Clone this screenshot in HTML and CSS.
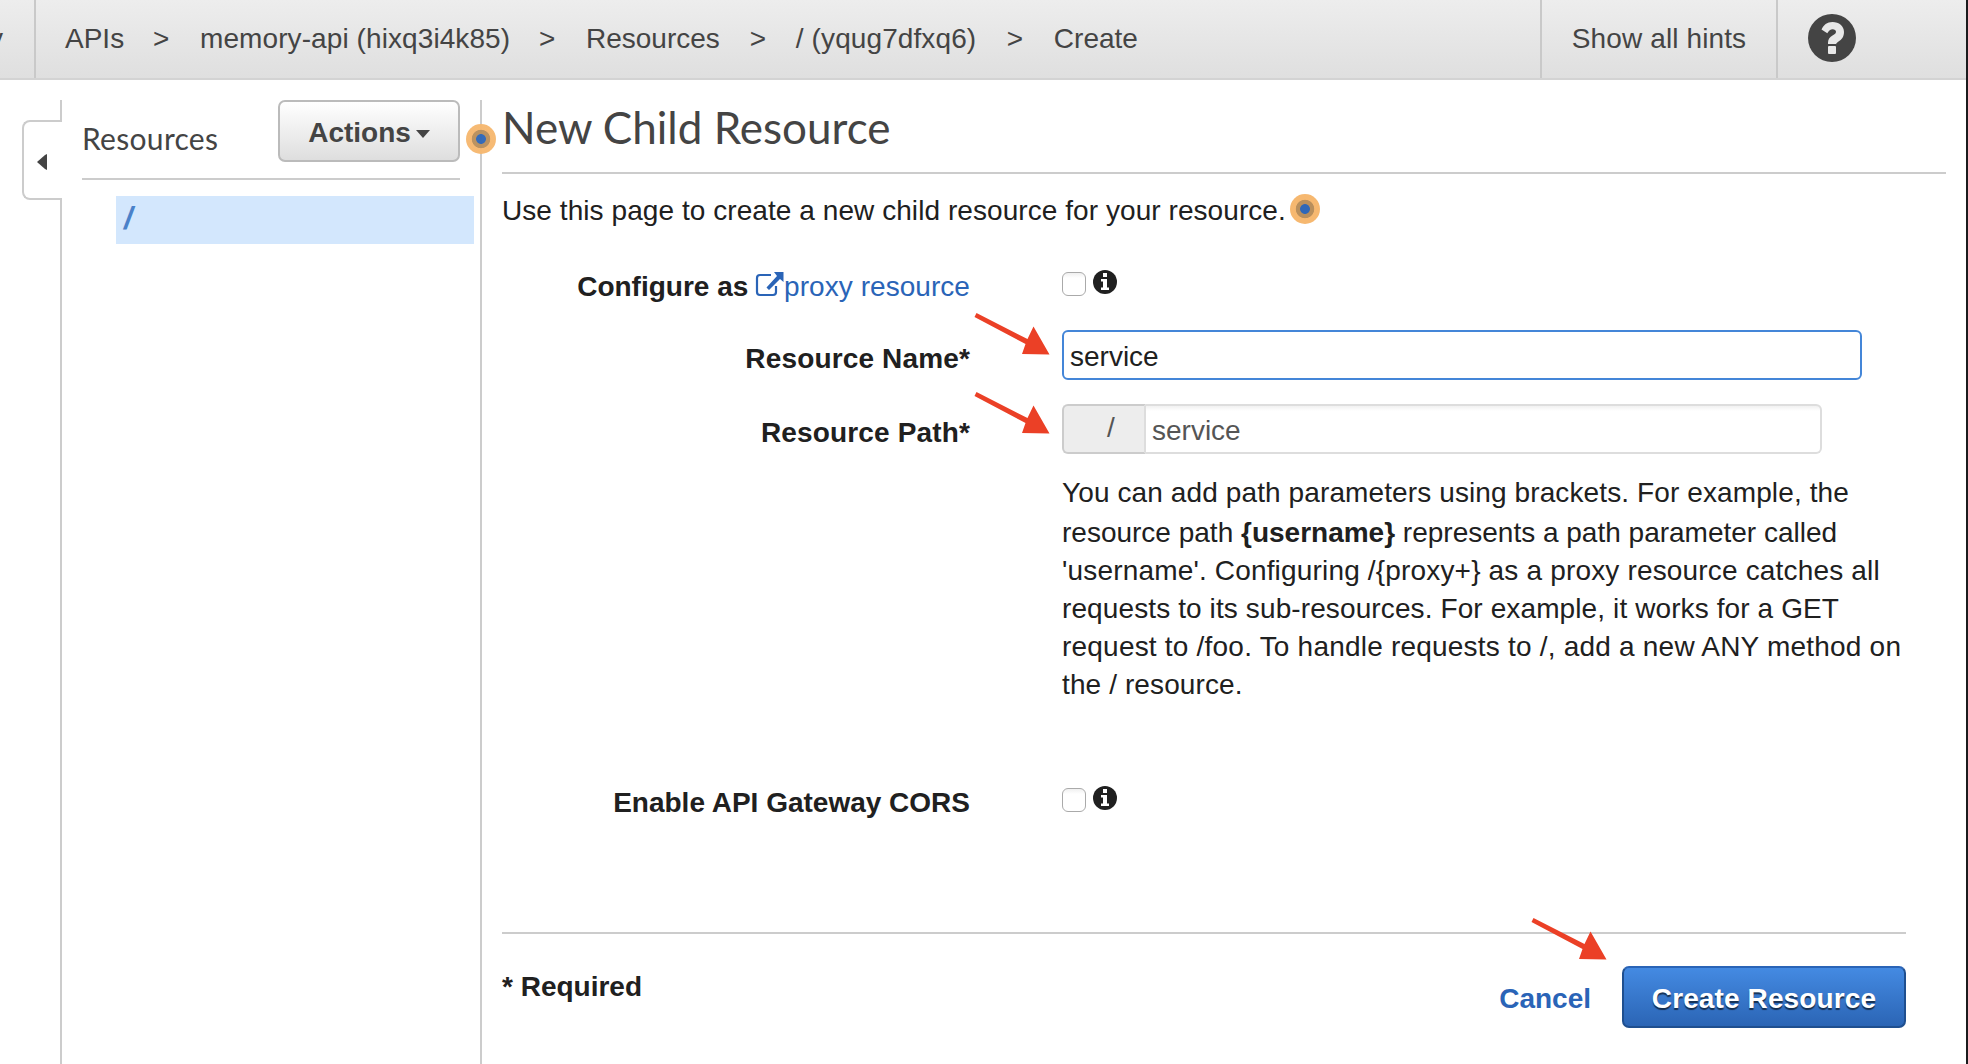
FILE: index.html
```html
<!DOCTYPE html>
<html lang="en">
<head>
<meta charset="utf-8">
<title>New Child Resource</title>
<link rel="stylesheet" href="styles.css">
</head>
<body>
<svg class="defs" width="0" height="0" aria-hidden="true">
  <symbol id="arrow" viewBox="0 0 80 50"><path d="M3.500 0 L54.500 26 L60.500 13.500 L76.500 41.500 L49 41 L52.500 31 L1.500 4 Z" fill="#eb4026"/></symbol>
  <symbol id="info" viewBox="0 0 24 24"><circle cx="12" cy="12" r="12" fill="#202020"/><path d="M10 3h4v4h-4zM8 9h6v8.500h2V20H8v-2.500h2v-6H8z" fill="#fff"/></symbol>
</svg>
<div class="window">
  <header class="topbar">
    <div class="service"><span>y</span></div>
    <nav class="crumbs">
      <span class="root">APIs</span><span class="sep">&gt;</span><span class="api">memory-api (hixq3i4k85)</span><span class="sep">&gt;</span><span>Resources</span><span class="sep">&gt;</span><span class="path-id">/ (yqug7dfxq6)</span><span class="sep">&gt;</span><span>Create</span>
    </nav>
    <div class="hints">Show all hints</div>
    <div class="help-link">
      <svg width="48" height="48" viewBox="0 0 48 48"><circle cx="24" cy="24" r="24" fill="#444"/><path d="M13.500 15.500C15.500 11 19 8 24.500 8C31 8 36 12 36 18C36 23 33.500 25.500 30.500 27.500C28.500 29 28 29.500 28 31V30H20V28.500C20 25 22 23 24.500 21.500C27 20 28 19.500 28 17.800C28 16.300 26.500 15.300 24.700 15.300C22.300 15.300 21 16.800 19.300 19.300Z" fill="#e8e8e8"/><rect x="20" y="32" width="8" height="8" rx="1" fill="#e8e8e8"/></svg>
    </div>
  </header>
  <div class="workspace">
    <div class="rail">
      <div class="rail-top"></div>
      <div class="collapse"><svg width="10" height="16" viewBox="0 0 10 16"><path d="M10 0V16L8 15L0 8L8 1Z" fill="#444"/></svg></div>
      <div class="rail-rest"></div>
    </div>
    <aside class="sidebar">
      <div class="side-head">
        <h2>Resources</h2>
        <button class="actions" type="button">Actions<i class="caret"></i></button>
      </div>
      <div class="tree-item">/</div>
    </aside>
    <main class="content">
      <span class="hint hint-edge"></span>
      <h1>New Child Resource</h1>
      <p class="intro">Use this page to create a new child resource for your resource.<span class="hint"></span></p>
      <form class="form">
        <label>Configure as <a><svg width="30" height="26" viewBox="0 0 30 26"><path d="M16 3H5Q2 3 2 6V20Q2 23 5 23H18Q21 23 21 20V14" fill="none" stroke="#2a64b7" stroke-width="2.200"/><path d="M19 0H28.500V10L25 7L14 18L11.500 15.500L22 4Z" fill="#2a64b7"/></svg>proxy resource</a></label>
        <div class="check"><input type="checkbox"><svg class="info" width="24" height="24"><use href="#info"/></svg></div>
        <label class="field-label">Resource Name*</label>
        <div class="field name-field"><input class="name" type="text" value="service"></div>
        <label class="field-label">Resource Path*</label>
        <div class="field">
          <div class="path"><span class="addon">/</span><input type="text" value="service"></div>
          <p class="help"><span class="wide">You can add path parameters using brackets. For example, the</span><br>resource path <strong>{username}</strong> represents a path parameter called<br><span class="wider">'username'. Configuring /{proxy+} as a proxy resource catches all</span><br><span class="wide">requests to its sub-resources. For example, it works for a GET</span><br><span class="widest">request to /foo. To handle requests to /, add a new ANY method on</span><br><span class="wide">the / resource.</span></p>
        </div>
        <label>Enable API Gateway CORS</label>
        <div class="check"><input type="checkbox"><svg class="info" width="24" height="24"><use href="#info"/></svg></div>
      </form>
      <footer class="footer">
        <span class="required">* Required</span>
        <a class="cancel">Cancel</a>
        <button class="create" type="button">Create Resource</button>
      </footer>
    </main>
  </div>
  <svg class="arrow a1"><use href="#arrow"/></svg>
  <svg class="arrow a2"><use href="#arrow"/></svg>
  <svg class="arrow a3"><use href="#arrow"/></svg>
</div>
</body>
</html>
```
FILE: styles.css
```css
* { box-sizing: border-box; }
body { margin: 0; background: #1b1b1d; overflow: hidden; }
.defs { position: absolute; }
.window {
  position: relative;
  width: 1966px;
  height: 1064px;
  display: flex;
  flex-direction: column;
  background: #fff;
  color: #202020;
  font: 28px/38px "Liberation Sans", Arial, sans-serif;
}
.topbar {
  height: 80px;
  flex: none;
  display: flex;
  border-bottom: 2px solid #d3d3d3;
  background: linear-gradient(#ededed, #dfdfdf);
  color: #444;
  white-space: nowrap;
}
.topbar > div, .crumbs { display: flex; align-items: center; }
.service { width: 36px; justify-content: flex-end; overflow: hidden; padding-right: 31px; border-right: 2px solid #c9c9c9; }
.crumbs { flex: 1; gap: 30px; padding-left: 29px; }
.root { width: 58px; }
.sep { width: 17px; }
.api { width: 309px; letter-spacing: .09px; }
.path-id { width: 181px; letter-spacing: .1px; margin-left: -1px; }
.hints { width: 238px; justify-content: center; border: solid #c9c9c9; border-width: 0 2px; letter-spacing: .12px; }
.topbar > .help-link { width: 188px; padding: 0 0 2px 30px; }
.workspace { flex: 1; display: flex; padding-top: 20px; }
.rail { width: 62px; display: flex; flex-direction: column; }
.rail-top { height: 22px; border-right: 2px solid #ccc; }
.collapse {
  height: 80px;
  margin: -2px 0 -2px 22px;
  padding: 4px 0 0 13px;
  display: flex;
  align-items: center;
  border: 2px solid #ccc;
  border-right: 0;
  border-radius: 8px 0 0 8px;
}
.rail-rest { flex: 1; border-right: 2px solid #ccc; }
.sidebar { width: 420px; padding-left: 20px; border-right: 2px solid #ccc; }
.side-head { width: 378px; height: 80px; display: flex; justify-content: space-between; border-bottom: 2px solid #ccc; }
h1, h2 { margin: 0; font-family: Lato, sans-serif; font-weight: 400; color: #444; white-space: nowrap; }
h2 { font-size: 30px; line-height: 38px; padding-top: 19px; letter-spacing: .3px; }
button { font: inherit; font-weight: 700; border-radius: 7px; padding: 0; white-space: nowrap; }
.actions {
  width: 182px;
  height: 62px;
  display: flex;
  align-items: center;
  justify-content: center;
  gap: 5px;
  padding: 3px 0 0 0;
  border: 2px solid #bbb;
  background: linear-gradient(#fff, #dedede);
  color: #444;
}
.caret { border: solid transparent; border-width: 8px 7.500px 0; border-top-color: #444; margin-top: 3px; }
.tree-item { width: 358px; height: 48px; margin: 16px 0 0 34px; padding: 4px 0 0 8px; background: #d3e7fd; color: #4a81c9; font-weight: 700; font-size: 31px; }
.tree-item { font-style: italic; }
.content { position: relative; flex: 1; padding-left: 20px; }
h1 { width: 1444px; height: 74px; border-bottom: 2px solid #ccc; font-size: 44px; line-height: 54px; }
.hint { display: inline-block; width: 30px; height: 30px; border-radius: 50%; background: radial-gradient(circle, #2e67b8 0 4.500px, #b98f5c 5.300px 8.800px, #f6b870 9.600px); }
.hint-edge { position: absolute; left: -16px; top: 24px; opacity: .97; }
.intro { display: flex; gap: 4px; margin: 0; height: 86px; padding-top: 18px; white-space: nowrap; letter-spacing: .065px; }
.intro .hint { margin-top: 2px; }
.form { display: grid; grid-template-columns: 468px 844px; column-gap: 92px; margin: 0; }
.form label { padding-top: 8px; text-align: right; font-weight: 700; white-space: nowrap; }
.form .field-label { padding-top: 10px; letter-spacing: .15px; }
.form a { color: #2a64b7; font-weight: 400; letter-spacing: .05px; }
.form a svg { margin: 0 -1px 0 -1px; vertical-align: -2px; }
.check { height: 70px; display: flex; gap: 7px; padding-top: 12px; }
.check input { appearance: none; width: 24px; height: 24px; margin: 0; border: 1.500px solid #aaa; border-radius: 6px; background: linear-gradient(#f0f0f0, #fff 5px); }
.info { margin-top: -2px; }
.name-field { height: 74px; }
.form input[type="text"] { height: 50px; padding: 5px 6px 2px; font: inherit; outline: 0; }
.form .name { display: block; width: 800px; border: 2px solid #4486d8; border-radius: 6px; color: #202020; }
.path { display: flex; width: 760px; }
.addon { width: 84px; height: 50px; padding: 3px 0 0 43px; border: 2px solid #ccc; border-right-color: #ddd; border-radius: 6px 0 0 6px; background: #ededed; color: #555; }
.path input[type="text"] { width: 676px; border: 2px solid #ddd; border-left: 0; border-radius: 0 6px 6px 0; color: #555; background: linear-gradient(#f1f1f1, #fff 5px); }
.help { margin: 20px 0 72px; white-space: nowrap; }
.help strong { display: inline-block; padding-top: 2px; }
.wide { letter-spacing: .11px; }
.wider { letter-spacing: .17px; }
.widest { letter-spacing: .21px; }
.footer { width: 1404px; height: 96px; margin-top: 86px; border-top: 2px solid #ccc; display: flex; align-items: flex-end; font-weight: 700; }
.required { flex: 1; align-self: flex-start; margin-top: 34px; }
.cancel { color: #2a64b7; margin: 0 31px 10px 0; }
.create {
  width: 284px;
  height: 62px;
  padding-top: 3px;
  border: 2px solid #1f4f8f;
  border-top-color: #2a64b7;
  background: linear-gradient(#448ae2, #2b65b5);
  color: #fff;
  letter-spacing: .12px;
  text-shadow: 0 2px 1px rgba(0, 0, 0, .6);
}
.arrow { position: absolute; width: 80px; height: 50px; }
.a1 { left: 973px; top: 313px; }
.a2 { left: 973px; top: 392px; }
.a3 { left: 1530px; top: 918px; }
```
